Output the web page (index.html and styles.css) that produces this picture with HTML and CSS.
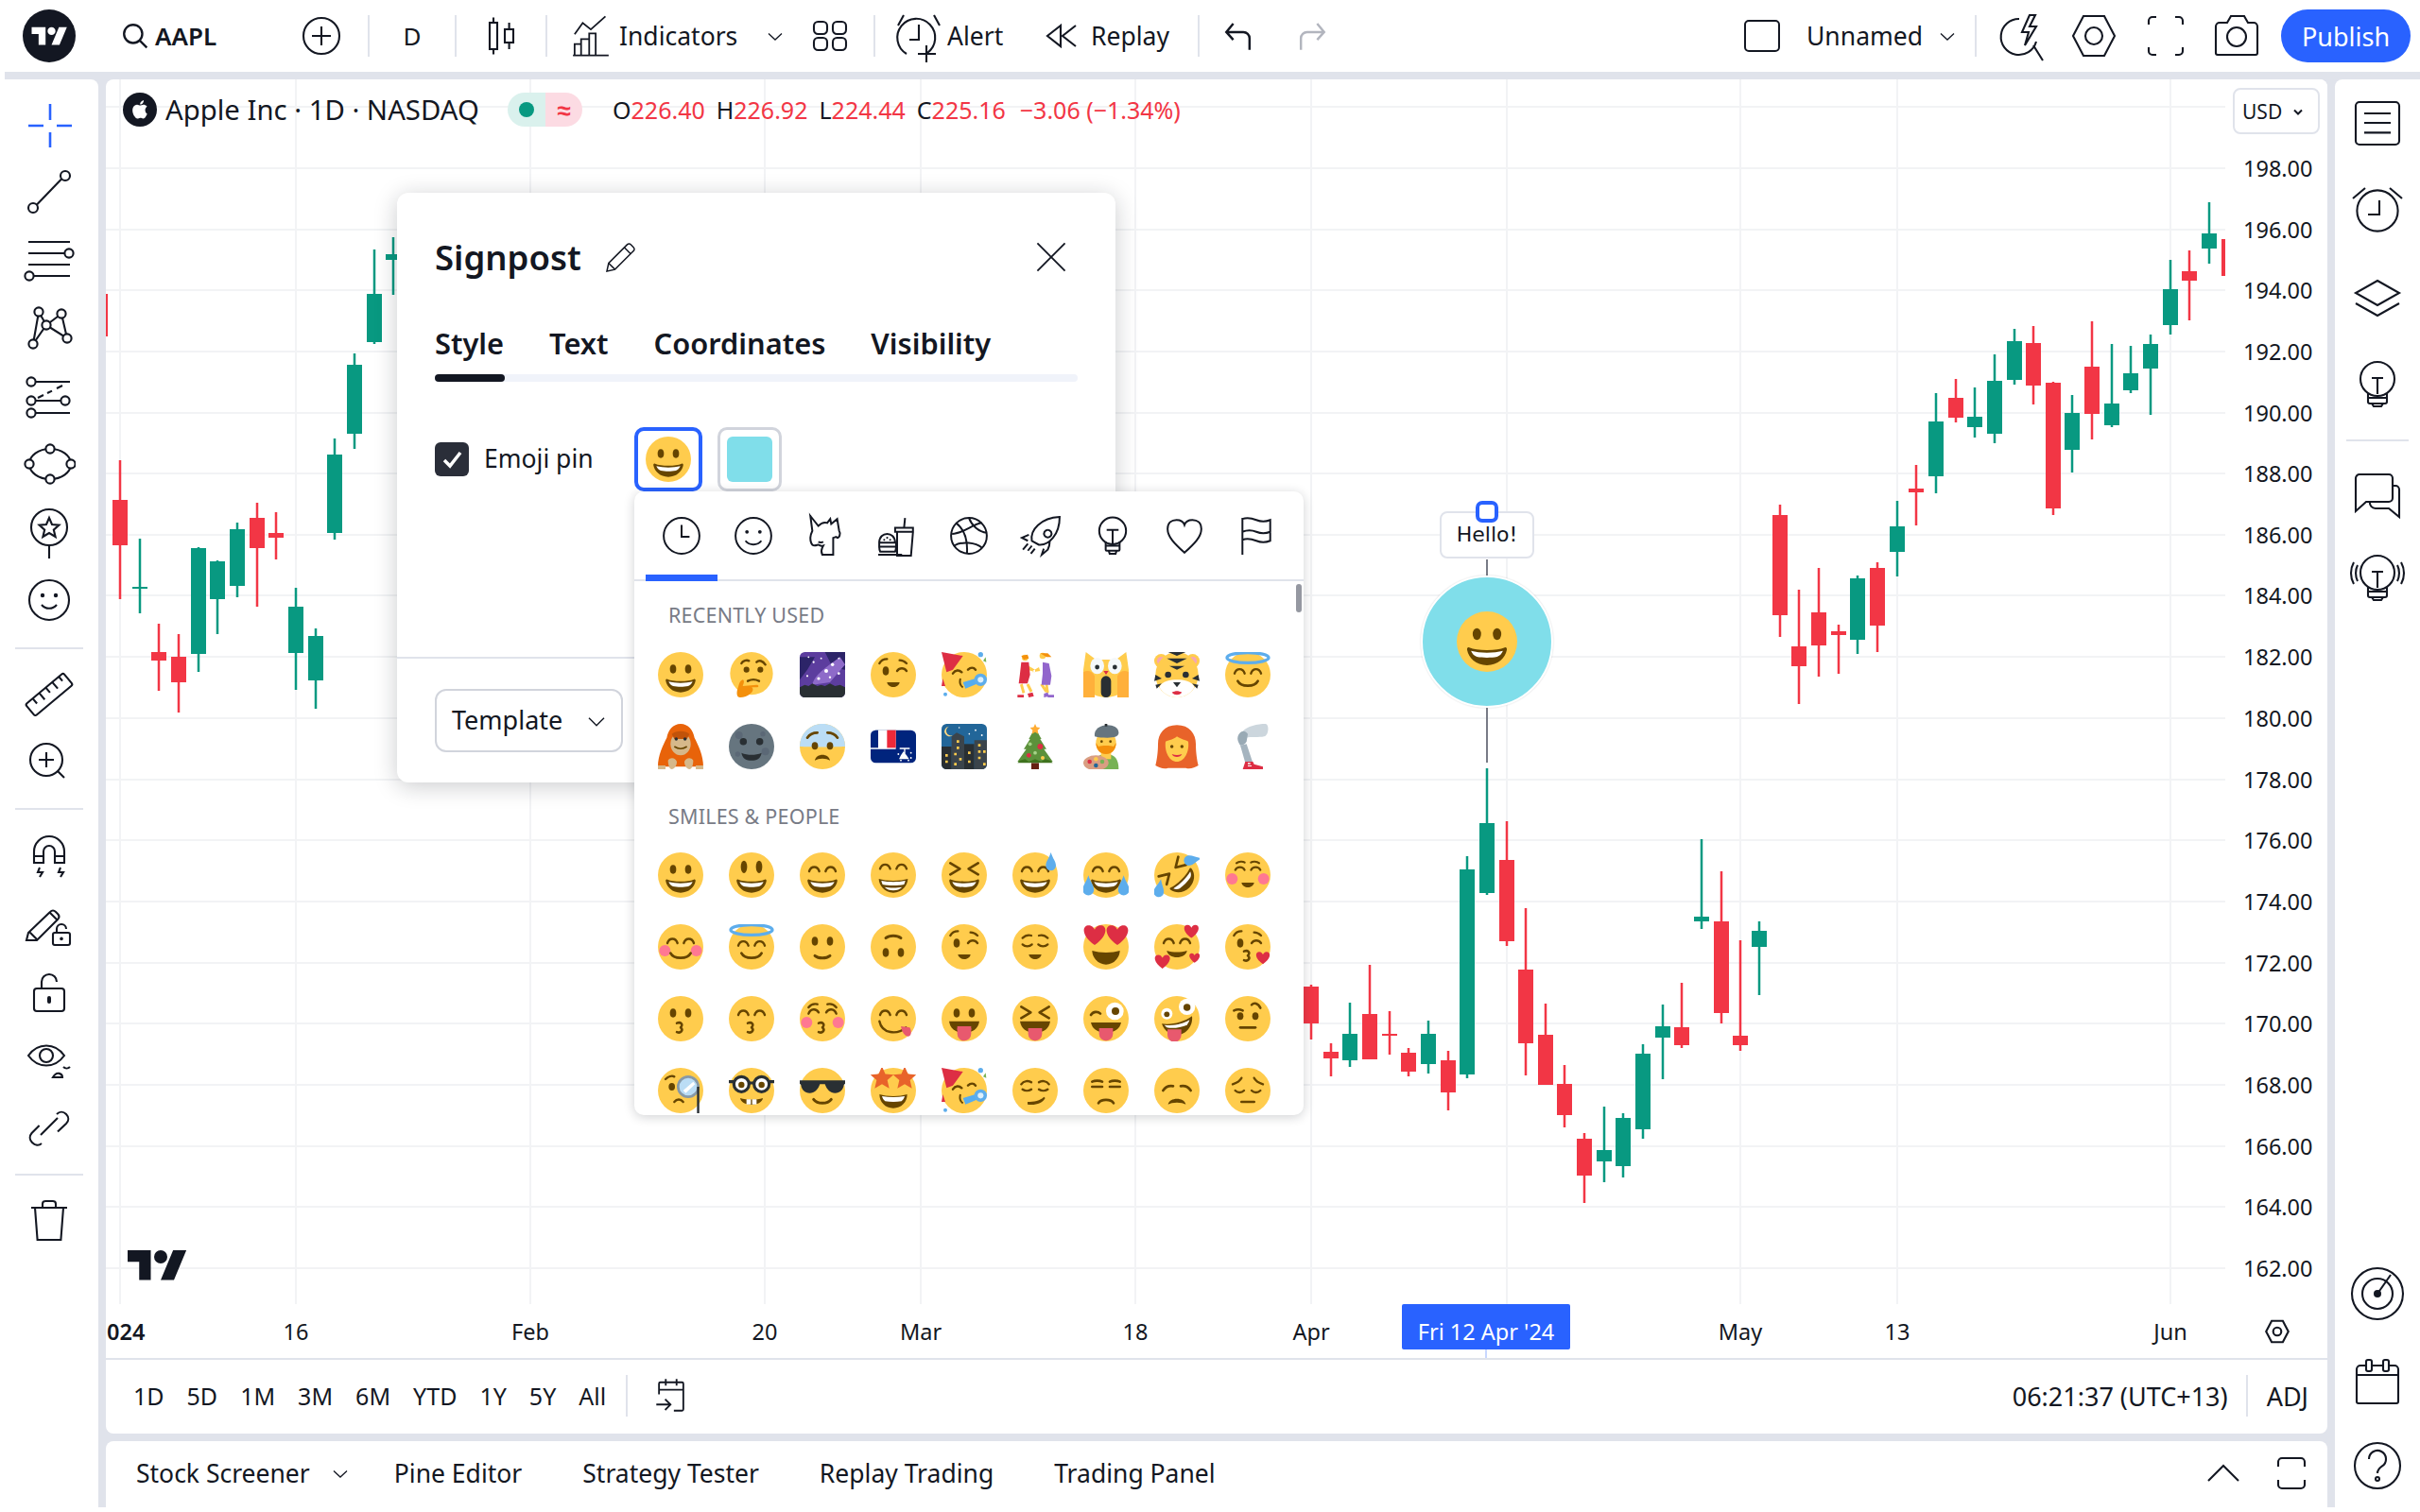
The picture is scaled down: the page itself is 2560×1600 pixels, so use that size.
FILE: index.html
```html
<!DOCTYPE html>
<html lang="en">
<head>
<meta charset="utf-8">
<title>AAPL chart</title>
<link rel="stylesheet" href="styles.css">
</head>
<body>
<svg class="defs" aria-hidden="true">
  <defs>
    <g id="tvlogo"><path d="M14 22H7V11H0V4h14v18zM28 22h-8l7.500-18h8L28 22z"/><circle cx="20" cy="8" r="4"/></g>
    <circle id="f" cx="18" cy="18" r="18" fill="#FFCC4D"/>
    <g id="eyes" fill="#664500"><ellipse cx="12" cy="13.500" rx="2.500" ry="3.500"/><ellipse cx="24" cy="13.500" rx="2.500" ry="3.500"/></g>
    <path id="arcs" fill="none" stroke="#664500" stroke-width="1.800" stroke-linecap="round" d="M7.500 15c1.500-4.500 6.500-4.500 8 0M20.500 15c1.500-4.500 6.500-4.500 8 0"/>
    <g id="mouth"><path fill="#664500" d="M7.500 21.500c2.500 1 6 1.500 10.500 1.500s8-.5 10.500-1.500c.9-.4 1.500.3 1.300 1.400C29 27.500 24.500 32 18 32S7 27.500 6.200 22.900c-.2-1.100.4-1.800 1.300-1.400z"/><path fill="#fff" d="M8.500 23.500c2.800.7 6 1.100 9.500 1.100s6.700-.4 9.500-1.100c-.6 1.700-2 3-3.500 3.500-3.500.7-8.500.7-12 0-1.500-.5-2.900-1.800-3.500-3.500z"/></g>
    <path id="smile" fill="none" stroke="#664500" stroke-width="2" stroke-linecap="round" d="M10 23c2.500 5 13.500 5 16 0"/>
    <path id="xeyes" fill="none" stroke="#664500" stroke-width="2" stroke-linecap="round" stroke-linejoin="round" d="M7 8.500l7.500 4.500L7 17.500M29 8.500l-7.500 4.500 7.500 4.500"/>
    <g id="cheeks" fill="#FF7892"><circle cx="5.500" cy="21" r="4.500"/><circle cx="30.500" cy="21" r="4.500"/></g>
    <path id="kiss" fill="none" stroke="#664500" stroke-width="1.900" stroke-linecap="round" stroke-linejoin="round" d="M15 21.500c3-1.200 5.500 1 3 3.400 2.500 2.200 0 5-3 3.700"/>
    <path id="heart" fill="#DD2E44" d="M0 5.500C-8 0-7.500-6-3.500-6-1.500-6-.5-4.500 0-3.500.5-4.500 1.500-6 3.500-6 7.500-6 8 0 0 5.500z"/>
    <path id="drop" fill="#5DADEC" d="M0-8C1.500-3 4-1 4 2.500a4 4 0 0 1-8 0C-4-1-1.500-3 0-8z"/>
    <path id="tongue" fill="#E8596E" d="M12.500 24.500v4.500a5.500 5.500 0 0 0 11 0v-4.500z"/>
    <g id="wink"><ellipse cx="12" cy="15" rx="2.500" ry="3.500" fill="#664500"/><path fill="none" stroke="#664500" stroke-width="1.800" stroke-linecap="round" d="M7 9c1-2 3.500-3.500 6-3.500M21 15c2-2.800 5.500-2.800 7.500 0M23 6.500c2 0 4 1 5.500 2.500"/></g>
    <path id="star" d="M0-8l2.300 5.300 5.700.5-4.300 3.800 1.300 5.600L0 4.300-5 7.200l1.300-5.600L-8-2.200l5.700-.5z" fill="#E8632A"/>

    <symbol id="grin" viewBox="0 0 36 36"><use href="#f"/><use href="#eyes"/><use href="#mouth"/></symbol>
    <symbol id="smiley" viewBox="0 0 36 36"><use href="#f"/><g fill="#664500"><ellipse cx="12" cy="11.500" rx="2.500" ry="5"/><ellipse cx="24" cy="11.500" rx="2.500" ry="5"/></g><use href="#mouth"/></symbol>
    <symbol id="happy" viewBox="0 0 36 36"><use href="#f"/><use href="#arcs"/><use href="#mouth"/></symbol>
    <symbol id="beam" viewBox="0 0 36 36"><use href="#f"/><use href="#arcs" y="-2"/><path fill="#664500" d="M6.500 21c3 1 7 1.500 11.500 1.500S26.500 22 29.500 21c0 5-4.500 11-11.500 11S6.500 26 6.500 21z"/><path fill="#fff" d="M8.500 22.500c3 .6 6 .9 9.500.9s6.500-.3 9.500-.9c-.2 1-.5 2-1 3-2.500.5-5.500.7-8.500.7s-6-.2-8.500-.7c-.5-1-.8-2-1-3zM11 27.500c2 .4 4.500.6 7 .6s5-.2 7-.6c-1.800 1.700-4.200 2.700-7 2.700s-5.200-1-7-2.700z"/></symbol>
    <symbol id="laugh" viewBox="0 0 36 36"><use href="#f"/><use href="#xeyes"/><use href="#mouth"/></symbol>
    <symbol id="sweat" viewBox="0 0 36 36"><use href="#f"/><use href="#arcs"/><use href="#mouth"/><use href="#drop" transform="translate(30.500 8)"/></symbol>
    <symbol id="joy" viewBox="0 0 36 36"><use href="#f"/><use href="#arcs"/><use href="#mouth"/><use href="#drop" transform="translate(4 27) scale(1.100)"/><use href="#drop" transform="translate(32 27) scale(1.100)"/></symbol>
    <symbol id="rofl" viewBox="0 0 36 36"><use href="#f"/><g transform="rotate(-45 18 18)"><use href="#xeyes"/><use href="#mouth"/></g><use href="#drop" transform="translate(4 29) rotate(10)"/><use href="#drop" transform="translate(30 6) rotate(80)"/></symbol>
    <symbol id="relaxed" viewBox="0 0 36 36"><use href="#f"/><use href="#cheeks"/><path fill="none" stroke="#664500" stroke-width="1.600" stroke-linecap="round" d="M8 14c1.500-3 6-3 7.500 0M20.500 14c1.500-3 6-3 7.500 0M9 8.500c2-1.500 5-1.500 6.500-.5M20.500 8c1.500-1 4.500-1 6.500.5"/><path fill="#664500" d="M13 24h10c-1 5-9 5-10 0z"/></symbol>
    <symbol id="blush" viewBox="0 0 36 36"><use href="#f"/><use href="#cheeks"/><use href="#arcs"/><use href="#smile"/></symbol>
    <symbol id="halo" viewBox="0 0 36 36"><use href="#f"/><use href="#arcs" y="2"/><use href="#smile"/><ellipse cx="18" cy="4.500" rx="16.500" ry="4" fill="none" stroke="#5DADEC" stroke-width="2.500"/></symbol>
    <symbol id="slight" viewBox="0 0 36 36"><use href="#f"/><use href="#eyes"/><path fill="none" stroke="#664500" stroke-width="2.200" stroke-linecap="round" d="M12 25c3 2.500 9 2.500 12 0"/></symbol>
    <symbol id="upside" viewBox="0 0 36 36"><use href="#slight" width="36" height="36" transform="rotate(180 18 18)"/></symbol>
    <symbol id="winky" viewBox="0 0 36 36"><use href="#f"/><use href="#wink"/><path fill="#664500" d="M13 24h10c-1 5-9 5-10 0z"/></symbol>
    <symbol id="relieved" viewBox="0 0 36 36"><use href="#f"/><path fill="none" stroke="#664500" stroke-width="1.700" stroke-linecap="round" d="M8 16c2 2 5.500 2 7.500 0M20.500 16c2 2 5.500 2 7.500 0M8 11c2-2 5-2.500 7-2M21 9c2-.5 5 0 7 2"/><path fill="#664500" d="M13 24h10c-1 5-9 5-10 0z"/></symbol>
    <symbol id="hearteyes" viewBox="0 0 36 36"><use href="#f"/><path fill="#664500" d="M7 21c3 1 7 1.500 11 1.500S26 22 29 21c0 5-4.500 11-11 11S7 26 7 21z"/><use href="#heart" transform="translate(9 9) scale(1.350)"/><use href="#heart" transform="translate(27 9) scale(1.350)"/></symbol>
    <symbol id="hearts" viewBox="0 0 36 36"><use href="#f"/><use href="#arcs"/><path fill="#664500" d="M10 21c5 1.500 11 1.500 16 0-1 7-15 7-16 0z"/><use href="#heart" transform="translate(29.500 6) scale(.9)"/><use href="#heart" transform="translate(6.500 30) scale(.95)"/><use href="#heart" transform="translate(32 27) scale(.65)"/></symbol>
    <symbol id="kissheart" viewBox="0 0 36 36"><use href="#f"/><use href="#wink"/><use href="#kiss"/><use href="#heart" transform="translate(30 27) scale(.85)"/></symbol>
    <symbol id="kissing" viewBox="0 0 36 36"><use href="#f"/><use href="#eyes"/><use href="#kiss"/></symbol>
    <symbol id="kisssmile" viewBox="0 0 36 36"><use href="#f"/><use href="#arcs"/><use href="#kiss"/></symbol>
    <symbol id="kissblush" viewBox="0 0 36 36"><use href="#f"/><use href="#cheeks"/><path fill="none" stroke="#664500" stroke-width="1.800" stroke-linecap="round" d="M7 14c1.500-4 6-4.500 8-1M21 13c2-3.500 6.500-3 8 1M7 9c2-2.500 5-3 7-2.500M22 6.500c2-.5 5 0 7 2.500"/><use href="#kiss"/></symbol>
    <symbol id="yum" viewBox="0 0 36 36"><use href="#f"/><use href="#arcs"/><path fill="none" stroke="#664500" stroke-width="1.800" stroke-linecap="round" d="M7 20c2 10 14 11 21 5"/><path fill="#E8596E" d="M24 24l7 1c2 3 1 7-1 7-3 0-5-3-6-8z"/></symbol>
    <symbol id="tongueout" viewBox="0 0 36 36"><use href="#f"/><use href="#eyes"/><path fill="#664500" d="M6 20h24c-1 6-5 9-12 9s-11-3-12-9z"/><use href="#tongue" y="1"/><path fill="#E8596E" d="M12.500 24h11v3h-11z"/></symbol>
    <symbol id="xtongue" viewBox="0 0 36 36"><use href="#f"/><use href="#xeyes"/><path fill="#664500" d="M6 20h24c-1 6-5 9-12 9s-11-3-12-9z"/><use href="#tongue" y="1"/></symbol>
    <symbol id="winkt" viewBox="0 0 36 36"><use href="#f"/><path fill="none" stroke="#664500" stroke-width="2" stroke-linecap="round" d="M6 15c2-3 5.500-3 7.500-1"/><circle cx="25" cy="12" r="7" fill="#fff"/><circle cx="25.500" cy="12" r="3" fill="#664500"/><path fill="#664500" d="M6 21h24c-1 5-5 8-12 8s-11-3-12-8z"/><use href="#tongue" y="1"/></symbol>
    <symbol id="zany" viewBox="0 0 36 36"><use href="#f"/><circle cx="26" cy="8.500" r="6.500" fill="#fff"/><circle cx="26" cy="9" r="2.800" fill="#664500"/><circle cx="10" cy="14" r="4.500" fill="#fff"/><circle cx="10" cy="14.500" r="2.200" fill="#664500"/><path fill="#664500" d="M6 22c8 1 17-1 24-6 1 8-5 15-12 15-5 0-10-3-12-9z"/><path fill="#fff" d="M8 23c8 1 15-1 20-4-.5 2-1.500 3-2 4-5 2-11 3-16 2z"/><use href="#tongue" x="-2" y="2"/></symbol>
    <symbol id="brow" viewBox="0 0 36 36"><use href="#f"/><g fill="#664500"><ellipse cx="12" cy="16" rx="2.500" ry="3"/><ellipse cx="24" cy="16" rx="2.500" ry="3"/><rect x="11" y="24" width="14" height="2" rx="1"/></g><path fill="none" stroke="#664500" stroke-width="1.900" stroke-linecap="round" d="M7 11.500c2-1 5-1 7 0M21 7c2-2 5-1.500 7 2.500"/></symbol>
    <symbol id="monocle" viewBox="0 0 36 36"><use href="#f"/><ellipse cx="11" cy="15" rx="2.500" ry="3" fill="#664500"/><path fill="none" stroke="#664500" stroke-width="1.800" stroke-linecap="round" d="M6 9c2-2 5-3 7-2M13 27c2-2.500 5-2.500 7 0"/><circle cx="24" cy="15" r="8" fill="#BBDDF5" stroke="#8899A6" stroke-width="2"/><path fill="#fff" d="M20 18l8-7 1.500 2-7.500 7z"/><rect x="31" y="15" width="1.800" height="21" fill="#292F33"/></symbol>
    <symbol id="nerd" viewBox="0 0 36 36"><use href="#f"/><g fill="#fff" stroke="#292F33" stroke-width="2.400"><circle cx="10" cy="13" r="6"/><circle cx="26" cy="13" r="6"/></g><path stroke="#292F33" stroke-width="2.400" d="M16 12h4M0 11h4M32 11h4"/><circle cx="10" cy="13.500" r="2.400" fill="#664500"/><circle cx="26" cy="13.500" r="2.400" fill="#664500"/><path fill="#664500" d="M9 24c5 1.500 13 1.500 18 0-1 7-17 7-18 0z"/><path fill="#fff" d="M14 25h3.500v4H14zM18.500 25H22v4h-3.500z"/></symbol>
    <symbol id="cool" viewBox="0 0 36 36"><use href="#f"/><path fill="#292F33" d="M0 10h36v2.500l-1 1c-.5 4-3 6.500-7 6.500-3.500 0-6.500-2.500-8-7h-4c-1.500 4.500-4.500 7-8 7-4 0-6.500-2.500-7-6.500l-1-1z"/><path fill="none" stroke="#664500" stroke-width="2.200" stroke-linecap="round" d="M11 25c3 4 11 4 14 0"/></symbol>
    <symbol id="starstruck" viewBox="0 0 36 36"><use href="#f"/><path fill="#664500" d="M7 21c3 1 7 1.500 11 1.500S26 22 29 21c0 6-4.500 11-11 11S7 27 7 21z"/><path fill="#fff" d="M9 22.500c6 1 12 1 18 0-.5 2-1.500 3-2.500 4-4 .7-9 .7-13 0-1-1-2-2-2.500-4z"/><use href="#star" transform="translate(9 8) scale(1.150)"/><use href="#star" transform="translate(27 8) scale(1.150)"/></symbol>
    <symbol id="party" viewBox="0 0 36 36"><use href="#f"/><path fill="#DD2E44" d="M0 0l17 3-8 11-5 2z"/><path fill="none" stroke="#664500" stroke-width="1.800" stroke-linecap="round" d="M9 17c2-3 5-3 7-1M21 14c2-2 4.500-2 6 0"/><path fill="none" stroke="#664500" stroke-width="1.500" d="M15 21c-1 3 0 6 2 7"/><path fill="#55ACEE" d="M17 24l13-4 1 4-12 5z"/><circle cx="31" cy="22" r="5" fill="#5DADEC"/><circle cx="31" cy="22" r="2.300" fill="#DCEFFC"/><circle cx="31" cy="2" r="2" fill="#5DADEC"/><circle cx="3" cy="33.500" r="1.500" fill="#5DADEC"/><path fill="#77B255" d="M33 7l2-3 .5 4z"/><path fill="#DD2E44" d="M1 21l2 6H0z"/></symbol>
    <symbol id="smirk" viewBox="0 0 36 36"><use href="#f"/><path fill="none" stroke="#664500" stroke-width="1.800" stroke-linecap="round" d="M7 13c2-3 6-3 8-1.500M21 11.500c2-1.500 6-1.500 8 1.500M8 17c2 1.500 5 1.500 7 0M21 17c2 1.500 5 1.500 7 0"/><path fill="#664500" d="M12 27c5 0 10-1 13-4l1 1c-2 4-8 6-14 5z"/></symbol>
    <symbol id="unamused" viewBox="0 0 36 36"><use href="#f"/><path fill="none" stroke="#664500" stroke-width="2" stroke-linecap="round" d="M7 11c2-1 6-1 8 0M21 11c2-1 6-1 8 0M7 15h8M21 15h8M12 28c2-3.500 10-3.500 12 0"/></symbol>
    <symbol id="sad" viewBox="0 0 36 36"><use href="#f"/><path fill="none" stroke="#664500" stroke-width="2" stroke-linecap="round" d="M7 18c2-3 5-4 8-3.500M21 14.500c3-.5 6 .5 8 3.500"/><path fill="#664500" d="M11 29c1-6 13-6 14 0-3-2-11-2-14 0z"/></symbol>
    <symbol id="pensive" viewBox="0 0 36 36"><use href="#f"/><path fill="none" stroke="#664500" stroke-width="1.800" stroke-linecap="round" d="M6 13c3-1 6-3 7-5M23 8c1 2 4 4 7 5M8 18c2 2 5 2 7 0M21 18c2 2 5 2 7 0"/><rect x="12" y="26" width="12" height="2" rx="1" fill="#664500"/></symbol>
    <symbol id="think" viewBox="0 0 36 36"><circle cx="18" cy="17" r="17" fill="#FFCC4D"/><circle cx="14" cy="14" r="2.300" fill="#664500"/><circle cx="25" cy="14" r="2.300" fill="#664500"/><path fill="none" stroke="#664500" stroke-width="1.800" stroke-linecap="round" d="M10 9c1-2 4-3 6-2M22 8c2-2 5-1 7 2M15 23c3-1.500 6-1.500 9 0"/><path fill="#F4900C" d="M9 36c-3 0-3-4-2-7 1-2 1-6 4-7 1.500 0 1 3 0 5l11-1c2 0 2 2 0 2h-4c2 1 1 4-1 5-2 2-5 3-8 3z"/></symbol>
    <symbol id="milky" viewBox="0 0 36 36"><rect width="36" height="36" rx="4" fill="#5C3D9E"/><path fill="#2C2468" d="M0 4h12L6 14 0 22zM20 0h16v14L26 12z"/><path fill="#8E6BC9" d="M10 26c2-9 14-16 22-22l4 6-12 14z"/><g fill="#fff"><circle cx="26" cy="10" r="1.300"/><circle cx="21" cy="15" r="1.500"/><circle cx="15" cy="21" r="1.200"/><circle cx="11" cy="8" r=".8"/><circle cx="6" cy="19" r=".8"/><circle cx="31" cy="17" r="1"/><circle cx="24" cy="20" r=".9"/><circle cx="31" cy="5" r=".7"/><circle cx="17" cy="5" r=".7"/><circle cx="7" cy="4" r=".7"/></g><path fill="#292F33" d="M0 28l4-2 3 1 3-2 4 2 3-1 3 1 4-2 4 2 4-1 4 2v4a4 4 0 0 1-4 4H4a4 4 0 0 1-4-4z"/></symbol>
    <symbol id="dancers" viewBox="0 0 36 36"><g fill="#FFCC4D"><circle cx="10" cy="4.500" r="2.500"/><circle cx="24" cy="3" r="2.500"/><path d="M13 11l5 3v2l-6-2zM21 12l-5 3v1l6-1zM8 25l2 7-2 1-2-7zM13 25l3 6-2 1-3-6zM24 25l4 6-2 1-4-6zM28 25l1 7-2 1-1-7z"/></g><path fill="#F4900C" d="M7 3l5-1 1 3-4 1zM22 1h6l3 3-4 0z"/><path fill="#DD2E44" d="M7 8h6l1 10-2 7H5l1-8z"/><path fill="#9266CC" d="M24 8l5 1 2 10-1 7h-7l1-9z"/><path fill="#DD2E44" d="M4 34h5v2H4zM12 33l4-1 1 3-4 1z"/><path fill="#9266CC" d="M25 33l3-1 1 3-4 1zM28 34h5v2h-5z"/></symbol>
    <symbol id="scream" viewBox="0 0 36 36"><path fill="#FFCC4D" d="M2 0l8 6h16l8-6 2 14v8a18 14 0 0 1-36 0v-8z"/><path fill="#FFB03B" d="M0 16c3-2 7-1 9 3v17H0zM36 16c-3-2-7-1-9 3v17h9z"/><ellipse cx="11" cy="11" rx="5.500" ry="6.500" fill="#F5F8FA"/><ellipse cx="25" cy="11" rx="5.500" ry="6.500" fill="#F5F8FA"/><circle cx="11" cy="12" r="1.800" fill="#292F33"/><circle cx="25" cy="12" r="1.800" fill="#292F33"/><path fill="#DD2E44" d="M16 15h4l-2 3z"/><rect x="14" y="19" width="8" height="17" rx="4" fill="#292F33"/></symbol>
    <symbol id="tiger" viewBox="0 0 36 36"><circle cx="5.500" cy="7" r="5.500" fill="#FFCC4D"/><circle cx="30.500" cy="7" r="5.500" fill="#FFCC4D"/><circle cx="5.500" cy="7" r="3.300" fill="#F7A6B4"/><circle cx="30.500" cy="7" r="3.300" fill="#F7A6B4"/><ellipse cx="18" cy="18" rx="17" ry="18" fill="#FFCC4D"/><path fill="#292F33" d="M11 0h14l-7 3zM10 5h16l-8 4zM12 11h12l-6 3zM1 18l5 3-6 2zM35 18l-5 3 6 2zM1 26l5-1-4 4zM35 26l-5-1 4 4z"/><circle cx="11" cy="18" r="2.500" fill="#292F33"/><circle cx="25" cy="18" r="2.500" fill="#292F33"/><path fill="#fff" d="M4 28c2-5 9-6 14-6s12 1 14 6c-3 5-8 8-14 8S7 33 4 28z"/><path fill="#292F33" d="M15 24h6l-3 4z"/><path fill="#DD2E44" d="M14 32c3-1.500 5-1.500 8 0-2 2.500-6 2.500-8 0z"/></symbol>
    <symbol id="orang" viewBox="0 0 36 36"><path fill="#E8630A" d="M18 0c6 0 10 5 11 11 3 6 7 14 7 23H0c0-9 4-17 7-23C8 5 12 0 18 0z"/><ellipse cx="18" cy="16" rx="8" ry="9" fill="#D6B88A"/><path fill="#C1530A" d="M11 8c3-3 11-3 14 0l-2 4H13z"/><circle cx="14.500" cy="12" r="1.300" fill="#292F33"/><circle cx="21.500" cy="12" r="1.300" fill="#292F33"/><path fill="none" stroke="#664500" stroke-width="1.200" d="M13 18c3 2 7 2 10 0"/><path fill="#D6B88A" d="M8 29c2-3 6-2 7 1 0 3-2 6-4 6s-3-4-3-7zM28 29c-2-3-6-2-7 1 0 3 2 6 4 6s3-4 3-7zM0 33h6v3H0zM30 33h6v3h-6z"/></symbol>
    <symbol id="moon" viewBox="0 0 36 36"><circle cx="18" cy="18" r="18" fill="#66757F"/><circle cx="8" cy="9" r="3" fill="#5B6876"/><circle cx="27" cy="8" r="2" fill="#5B6876"/><circle cx="29" cy="22" r="3" fill="#5B6876"/><circle cx="7" cy="24" r="2" fill="#5B6876"/><circle cx="11.500" cy="14" r="2.800" fill="#292F33"/><circle cx="24.500" cy="14" r="2.800" fill="#292F33"/><path fill="#292F33" d="M10 23c5 2 11 2 16 0-1 5-4 6-8 6s-7-1-8-6z"/></symbol>
    <symbol id="fear" viewBox="0 0 36 36"><use href="#f"/><path fill="#BBDDF5" d="M0 18C0 8 8 0 18 0s18 8 18 18c-8 .5-28 .5-36 0z"/><ellipse cx="12" cy="17.500" rx="2.500" ry="3" fill="#664500"/><ellipse cx="24" cy="17.500" rx="2.500" ry="3" fill="#664500"/><path fill="none" stroke="#664500" stroke-width="2" stroke-linecap="round" d="M6 11c2-3 5-4 8-4M22 7c3 0 6 1 8 4"/><path fill="#664500" d="M12 29c1-6 11-6 12 0-3-2-9-2-12 0z"/></symbol>
    <symbol id="flagtf" viewBox="0 0 36 36"><path fill="#00247D" d="M4 5h28a4 4 0 0 1 4 4v18a4 4 0 0 1-4 4H4a4 4 0 0 1-4-4V9a4 4 0 0 1 4-4z"/><path fill="#fff" d="M0 9a4 4 0 0 1 4-4h16v15H0z"/><path fill="#00247D" d="M0 9a4 4 0 0 1 4-4h2v14H0z"/><path fill="#ED2939" d="M13 5h7v14h-7z"/><g fill="#fff"><path d="M23 19h8v1h-3.500v6h-1v-6H23zM24 25l2-3 2.500 3 2 3h-8z"/><circle cx="22" cy="24" r=".7"/><circle cx="32" cy="23" r=".7"/><circle cx="24" cy="29" r=".7"/><circle cx="30" cy="29" r=".7"/><circle cx="32" cy="27" r=".7"/></g></symbol>
    <symbol id="night" viewBox="0 0 36 36"><rect width="36" height="36" rx="4" fill="#226699"/><path fill="#FFD983" d="M6 2a4 4 0 1 0 3 7 3.500 3.500 0 1 1-3-7z"/><g fill="#fff"><circle cx="14" cy="3" r=".6"/><circle cx="27" cy="5" r=".7"/><circle cx="32" cy="9" r=".7"/><circle cx="22" cy="8" r=".6"/></g><path fill="#292F33" d="M0 18h8v18H4a4 4 0 0 1-4-4z"/><path fill="#3B444B" d="M8 10l4-3 6 3v26H8z"/><path fill="#292F33" d="M18 16h8v20h-8z"/><path fill="#3B444B" d="M26 13h10v19a4 4 0 0 1-4 4h-6z"/><g fill="#FFCC4D"><path d="M12 13h2v2h-2zM12 18h2v2h-2zM10 23h2v2h-2zM14 27h2v2h-2zM10 31h2v2h-2zM3 24h2v2H3zM3 29h2v2H3zM21 22h2v2h-2zM21 29h2v2h-2zM29 16h2v2h-2zM29 21h2v2h-2zM33 21h2v2h-2zM29 26h2v2h-2zM33 31h2v2h-2z"/></g></symbol>
    <symbol id="tree" viewBox="0 0 36 36"><path fill="#662113" d="M15 31h6v5h-6z"/><path fill="#5C913B" d="M18 3l5 9-1 0 5 8-2 0 7 10H4l7-10H9l5-8-1 0z"/><path fill="#3E721D" d="M6 29l4-1 3 2 5-2 5 2 3-2 4 1 2 2H4z"/><path fill="#FFAC33" d="M18 0l1.200 2.600 2.800.4-2 2 .5 3L18 6.600 15.500 8l.5-3-2-2 2.800-.4z"/><circle cx="22" cy="18" r="2.200" fill="#DD2E44"/><circle cx="13" cy="25" r="1.800" fill="#DD2E44"/><circle cx="24" cy="27" r="1.500" fill="#FFCC4D"/><circle cx="14" cy="16" r="1.400" fill="#A6D388"/><circle cx="18" cy="23" r="1.400" fill="#A6D388"/></symbol>
    <symbol id="artist" viewBox="0 0 36 36"><path fill="#77B255" d="M8 36c0-8 3-12 10-12s10 4 10 12z"/><path fill="#FFCC4D" d="M14 22h8v6h-8z"/><ellipse cx="18" cy="15" rx="8" ry="9" fill="#FFCC4D"/><path fill="#F4900C" d="M10 15c0 5 3 9 8 9s8-4 8-9l-2 3c-3-1-9-1-12 0z"/><circle cx="14.500" cy="14" r="1" fill="#664500"/><circle cx="21.500" cy="14" r="1" fill="#664500"/><path fill="#66757F" d="M9 10C8 4 14 1 19 1s9 2 9 6c0 3-3 4-9 4-4 0-7 0-10-1z"/><path fill="#292F33" d="M17 0h2v2h-2z"/><ellipse cx="10" cy="31" rx="10" ry="6" fill="#D99E82"/><circle cx="5" cy="30" r="1.700" fill="#DD2E44"/><circle cx="10" cy="28" r="1.700" fill="#FFCC4D"/><circle cx="15" cy="30" r="1.700" fill="#77B255"/><circle cx="10" cy="33" r="1.700" fill="#226699"/></symbol>
    <symbol id="redhair" viewBox="0 0 36 36"><path fill="#E8632A" d="M18 1c10 0 15 7 15 15 0 7 1 13 2 17-3 2-7 3-10 2H11c-3 1-7 0-10-2 1-4 2-10 2-17C3 8 8 1 18 1z"/><path fill="#FFCC4D" d="M18 10c3 2 7 3 9 4 1 8-3 16-9 16S8 22 9 14c3-1 7-2 9-4z"/><circle cx="14" cy="18" r="1.300" fill="#664500"/><circle cx="22" cy="18" r="1.300" fill="#664500"/><path fill="#DD2E44" d="M14 24c3 1 5 1 8 0-1 3-7 3-8 0z"/></symbol>
    <symbol id="mechleg" viewBox="0 0 36 36"><path fill="#CCD6DD" d="M14 6c3-4 12-6 18-6 3 0 3 9-1 10-4 1-11 0-14 1z"/><path fill="#99AAB5" d="M11 8c2-3 5-3 7 0l-1 6c-1 2-3 3-5 3-2-3-3-6-1-9z"/><path fill="#A5B4BF" d="M12 17l5-1 5 15h-6z"/><path fill="#DD2E44" d="M16 30h6l1 2 7 2v2H14z"/><path fill="#fff" d="M18 31h2v1h-2zM18 33h3v.8h-3z"/></symbol>

    <g id="bulbshape"><circle cx="14" cy="11" r="9"/><path d="M9 18.500V23a1 1 0 0 0 1 1h8a1 1 0 0 0 1-1v-4.500M9 21h10M11 24l1 1.500h4l1-1.500M11 10.500h6M14 10.500V19"/></g>
  </defs>
</svg>

<div class="app">
  <header class="topbar">
    <svg class="logo" viewBox="0 0 56 56"><circle cx="28" cy="28" r="28" fill="#131722"/><use href="#tvlogo" fill="#fff" transform="translate(9.500 14.500) scale(1.050)"/></svg>
    <div class="symbol"><svg class="i28 gapicon" viewBox="0 0 28 28"><circle class="st1" cx="12" cy="12" r="9"/><path class="st1" d="M18.500 18.500l7 7"/></svg><span class="bold">AAPL</span></div>
    <svg class="i44 plus" viewBox="0 0 22 22"><circle class="st" cx="11" cy="11" r="9.500"/><path class="st" d="M11 6v10M6 11h10"/></svg>
    <i class="tsep s1"></i>
    <span class="res">D</span>
    <i class="tsep s2"></i>
    <svg class="i56 cndl" viewBox="0 0 28 28"><g class="st"><path d="M9.500 4.200v19.600M17.800 7v14"/><rect x="7.500" y="7" width="4" height="14" fill="#fff"/><rect x="15.500" y="10.500" width="4.500" height="7" fill="#fff"/></g></svg>
    <i class="tsep s3"></i>
    <svg class="i48 indic" viewBox="0 0 28 28"><path class="st" d="M4 25.500V19h4v6.500M8 25.500V16h5v9.500M13 25.500V12.500h4v13M3 26h22M4 13l5-7 5 4 9-8"/></svg>
    <span class="lbl ind-t">Indicators</span>
    <svg class="chev ind-c" viewBox="0 0 18 18"><path class="st15" d="M2 6.500l7 6.500 7-6.500"/></svg>
    <svg class="i56 tmpl" viewBox="0 0 28 28"><g class="st"><rect x="5.500" y="6.500" width="7" height="6.500" rx="2.200"/><rect x="15.500" y="6.500" width="7" height="6.500" rx="2.200"/><rect x="5.500" y="15" width="7" height="6.500" rx="2.200"/><rect x="15.500" y="15" width="7" height="6.500" rx="2.200"/></g></svg>
    <i class="tsep s4"></i>
    <svg class="i56 alrt" viewBox="0 0 28 28"><path class="st" d="M18.500 23a10 10 0 1 0-11 .5M14 8v8H9M18 19v9M13.500 23.500h9.500M3 8.500L6 3M25 8.500L22 3"/></svg>
    <span class="lbl alrt-t">Alert</span>
    <svg class="i56 rply" viewBox="0 0 28 28"><path class="st" d="M12 8.500L5 14l7 5.500zM20 8.500L13 14l7 5.500"/></svg>
    <span class="lbl rply-t">Replay</span>
    <i class="tsep s5"></i>
    <svg class="i36 undo" viewBox="0 0 22 22"><path class="st13" d="M6.500 3L2 8.500l4.500 5M2.500 8.500H13a4 4 0 0 1 4 4V20"/></svg>
    <svg class="i36 redo" viewBox="0 0 22 22"><path class="stg" d="M15.500 3L20 8.500l-4.500 5M19.500 8.500H9a4 4 0 0 0-4 4V20"/></svg>
    <div class="grow"></div>
    <svg class="layout" viewBox="0 0 40 36"><rect class="st2" x="2" y="2" width="36" height="32" rx="4"/></svg>
    <span class="lbl unn">Unnamed</span>
    <svg class="chev unn-c" viewBox="0 0 18 18"><path class="st15" d="M2 6.500l7 6.500 7-6.500"/></svg>
    <i class="tsep s6"></i>
    <svg class="i56 qs" viewBox="0 0 28 28"><path class="st" d="M11 5A9.500 9.500 0 1 0 20 17M18.500 19l5 8M16.500 3l-4 9h3.500l-2 7 6-10h-3.500l3-6z"/></svg>
    <svg class="i56 hex" viewBox="0 0 28 28"><path class="st" d="M8.500 3.500h11L25 14l-5.500 10.500h-11L3 14z"/><circle class="st" cx="14" cy="14" r="4.500"/></svg>
    <svg class="i56 fs" viewBox="0 0 28 28"><path class="st" d="M5 8V6a2 2 0 0 1 2-2h2M19 4h2a2 2 0 0 1 2 2v2M23 20v2a2 2 0 0 1-2 2h-2M9 24H7a2 2 0 0 1-2-2v-2"/></svg>
    <svg class="i56 cam" viewBox="0 0 28 28"><path class="st" d="M3 9a2 2 0 0 1 2-2h4l2-3.500h7L20 7h3a2 2 0 0 1 2 2v14a1 1 0 0 1-1 1H4a1 1 0 0 1-1-1z"/><circle class="st" cx="14" cy="14.500" r="5"/></svg>
    <span class="publish">Publish</span>
  </header>

  <div class="workspace">
    <aside class="lefttools">
      <div class="tool"><svg class="i56" viewBox="0 0 28 28"><path class="stb" d="M14.500 3.500V12M14.500 18.500v8M3 15h8M18 15h8"/></svg></div>
      <div class="tool"><svg class="i56" viewBox="0 0 28 28"><path class="st" d="M20.500 7.300L7.500 20.700"/><circle class="st" cx="22.500" cy="5.500" r="2.500"/><circle class="st" cx="5.500" cy="22.500" r="2.500"/></svg></div>
      <div class="tool"><svg class="i56" viewBox="0 0 28 28"><path class="st" d="M3 4.500h22M3 10.500h19M3 16.500h22M6 22.500h19"/><circle class="st" cx="24.500" cy="10.500" r="2.300"/><circle class="st" cx="3.500" cy="22.500" r="2.300"/></svg></div>
      <div class="tool"><svg class="i56" viewBox="0 0 28 28"><path class="st" d="M5.500 22.500L8.500 5.500 12.500 12.500 20.500 6.500 23.500 19.500 12.500 12.500 5.500 22.500"/><g class="stw"><circle cx="8.500" cy="5.500" r="2.300"/><circle cx="20.500" cy="6.500" r="2.300"/><circle cx="12.500" cy="12.500" r="2.300"/><circle cx="5.500" cy="22.500" r="2.300"/><circle cx="23.500" cy="19.500" r="2.300"/></g></svg></div>
      <div class="tool"><svg class="i56" viewBox="0 0 28 28"><path class="st" d="M7 6.500h18M7 16.500h13M7 23h18M8 15l3-1.500M13 12.500l2.500-1.200M18 10l3-1.500"/><circle class="st" cx="4.500" cy="6.500" r="2.300"/><circle class="st" cx="4.500" cy="16.500" r="2.300"/><circle class="st" cx="22.500" cy="16.500" r="2.300"/><circle class="st" cx="4.500" cy="23" r="2.300"/></svg></div>
      <div class="tool"><svg class="i56" viewBox="0 0 28 28"><ellipse class="st" cx="14.500" cy="14" rx="11" ry="8"/><g class="stw"><circle cx="3.500" cy="14" r="2.300"/><circle cx="14.500" cy="6" r="2.300"/><circle cx="25.500" cy="14" r="2.300"/><circle cx="14.500" cy="22" r="2.300"/></g></svg></div>
      <div class="tool"><svg class="i56" viewBox="0 0 28 28"><circle class="st" cx="14" cy="11.500" r="9.500"/><path class="st" d="M14 21v7M14 6.500l1.500 3.500 3.700.3-2.800 2.500.9 3.700-3.300-2-3.300 2 .9-3.700-2.800-2.500 3.700-.3z"/></svg></div>
      <div class="tool"><svg class="i56" viewBox="0 0 28 28"><circle class="st" cx="14" cy="14" r="10.500"/><circle cx="10.500" cy="11.500" r="1.100" fill="#131722"/><circle cx="17.500" cy="11.500" r="1.100" fill="#131722"/><path class="st" d="M10 16.500c2 2.500 6 2.500 8 0"/></svg></div>
      <div class="vsep first"></div>
      <div class="tool short"><svg class="i56" viewBox="0 0 28 28"><g transform="rotate(-40 14 14)"><rect class="st" x="1" y="10" width="26" height="8" rx="1"/><path class="st" d="M6 10v3.500M10.500 10v4.500M15 10v3.500M19.500 10v4.500M24 10v3"/></g></svg></div>
      <div class="tool short"><svg class="i56" viewBox="0 0 28 28"><circle class="st" cx="12.500" cy="14" r="8.500"/><path class="st" d="M12.500 10v8M8.500 14h8M18.500 20l3.500 3.500"/></svg></div>
      <div class="vsep second"></div>
      <div class="tool mid"><svg class="i56" viewBox="0 0 28 28"><path class="st" d="M6 17V11a8 8 0 0 1 16 0v6h-5v-6a3 3 0 0 0-6 0v6H6zM6 13.500h5M17 13.500h5M9 19.500l-1 2.500h2.500L9 24.500M20 19.500l-1 2.500h2.500L20 24.500"/></svg></div>
      <div class="tool mid"><svg class="i56" viewBox="0 0 28 28"><path class="st" d="M2 22.500h5.500L18.500 11.500c1-1 1-2 0-3l-1-1c-1-1-2-1-3 0L3 18.500zM3.500 18l4 4M14.500 8l4 4"/><rect class="st" x="16" y="18.500" width="9" height="6.500" rx="1"/><path class="st" d="M18 18.500V16.500a2.500 2.500 0 0 1 5 0"/><circle cx="20.500" cy="21.700" r=".9" fill="#131722"/></svg></div>
      <div class="tool mid"><svg class="i56" viewBox="0 0 28 28"><rect class="st" x="6" y="12" width="16" height="12" rx="1.500"/><path class="st" d="M10 12V8.500a4 4 0 0 1 8 0"/><rect x="13" y="16" width="2" height="4" rx="1" fill="#131722"/></svg></div>
      <div class="tool mid"><svg class="i56" viewBox="0 0 28 28"><path class="st" d="M3 12c5-7 14-7 19 0-5 7-14 7-19 0z"/><circle class="st" cx="12.500" cy="12" r="3.500"/><path class="st" d="M16 23.500h5c0-2-3-3.500-5 0zM21.500 18c1 1 2.500 1 3.500 0"/></svg></div>
      <div class="tool mid"><svg class="i56" viewBox="0 0 28 28"><path class="st" d="M10 22.500c-1.500 1.300-3.500 1-5-.5s-1.500-3.500-.2-5l4-4M18 7c1.500-1.500 3.500-1.500 5 0s1.500 3.500 0 5l-4.500 4.300M9.500 18l9-9"/></svg></div>
      <div class="vsep third"></div>
      <div class="tool"><svg class="i56" viewBox="0 0 28 28"><path class="st" d="M4.500 7.500h19M10.500 7.500V5.500a1.500 1.500 0 0 1 1.500-1.500h4a1.500 1.500 0 0 1 1.500 1.500v2M6.500 7.500l1.300 17h12.400l1.300-17"/></svg></div>
    </aside>

    <div class="center">
      <main class="chart">
        <div class="pane">
          <svg class="plot" viewBox="112 84 2350 1353" role="img" aria-label="Candlestick chart">
            <path class="gridl" d="M112 113H2354M112 178H2354M112 243H2354M112 307H2354M112 372H2354M112 437H2354M112 501H2354M112 566H2354M112 630H2354M112 695H2354M112 760H2354M112 825H2354M112 889H2354M112 954H2354M112 1019H2354M112 1083H2354M112 1148H2354M112 1213H2354M112 1277H2354M112 1342H2354M127 84V1380M313 84V1380M561 84V1380M809 84V1380M974 84V1380M1201 84V1380M1387 84V1380M1594 84V1380M1841 84V1380M2007 84V1380M2296 84V1380"/>
            <path class="wick red" d="M127 487V634M168 660V731M189 671V754M272 532V642M292 542V592M1387 1042V1100M1408 1104V1139M1449 1021V1121M1470 1070V1116M1490 1109V1139M1532 1112V1175M1594 869V1001M1614 961V1138M1635 1062V1148M1655 1127V1193M1676 1199V1273M1779 1040V1109M1821 922V1083M1841 995V1112M1883 534V674M1903 624V745M1924 601V716M1945 661V713M1986 595V690M2027 492V556M2069 401V447M2151 345V428M2172 404V545M2213 340V465M2316 265V339"/>
            <path class="body red" d="M106 311V356M127 529V577M168 690V699M189 695V722M272 548V580M292 564V569M1387 1044V1083M1408 1113V1120M1449 1073V1121M1470 1094V1096M1490 1114V1134M1532 1122V1156M1594 910V996M1614 1026V1104M1635 1095V1148M1655 1147V1180M1676 1205V1244M1779 1087V1106M1821 975V1072M1841 1096V1106M1883 545V651M1903 684V705M1924 648V683M1945 668V672M1986 601V662M2027 517V521M2069 421V442M2151 363V408M2172 405V538M2213 388V438M2316 287V297M2358 253V292"/>
            <path class="wick grn" d="M148 570V649M210 579V711M230 593V671M251 553V632M313 622V730M334 665V750M354 464V571M375 374V475M396 264V364M416 251V312M1428 1061V1129M1511 1080V1136M1552 906V1141M1573 813V947M1697 1171V1251M1717 1178V1246M1738 1105V1205M1759 1063V1142M1800 888V983M1861 975V1053M1965 609V692M2007 530V610M2048 416V522M2089 410V463M2110 375V469M2131 348V407M2192 418V500M2234 364V452M2254 366V416M2275 354V439M2296 275V354M2337 214V279"/>
            <path class="body grn" d="M148 621V623M210 580V692M230 594V634M251 560V620M313 642V691M334 673V720M354 481V564M375 386V459M396 311V362M416 269V275M1428 1094V1122M1511 1094V1126M1552 920V1137M1573 871V945M1697 1217V1229M1717 1183V1234M1738 1115V1195M1759 1086V1098M1800 970V975M1861 985V1002M1965 612V677M2007 557V584M2048 446V504M2089 441V452M2110 403V459M2131 361V402M2192 437V476M2234 427V450M2254 395V413M2275 364V390M2296 306V344M2337 247V263"/>
            <rect class="axisbg" x="2354" y="84" width="108" height="1354"/>
            <rect class="axisbg" x="112" y="1380" width="2350" height="58"/>
            <use href="#tvlogo" class="mark" transform="translate(135 1316) scale(1.750)"/>
            <g class="plabels">
              <text x="2373" y="187">198.00</text><text x="2373" y="252">196.00</text><text x="2373" y="316">194.00</text><text x="2373" y="381">192.00</text><text x="2373" y="446">190.00</text><text x="2373" y="510">188.00</text><text x="2373" y="575">186.00</text><text x="2373" y="639">184.00</text><text x="2373" y="704">182.00</text><text x="2373" y="769">180.00</text><text x="2373" y="834">178.00</text><text x="2373" y="898">176.00</text><text x="2373" y="963">174.00</text><text x="2373" y="1028">172.00</text><text x="2373" y="1092">170.00</text><text x="2373" y="1157">168.00</text><text x="2373" y="1222">166.00</text><text x="2373" y="1286">164.00</text><text x="2373" y="1351">162.00</text>
            </g>
            <g class="tlabels">
              <text class="thick" x="113" y="1418">024</text><text x="313" y="1418">16</text><text x="561" y="1418">Feb</text><text x="809" y="1418">20</text><text x="974" y="1418">Mar</text><text x="1201" y="1418">18</text><text x="1387" y="1418">Apr</text><text x="1841" y="1418">May</text><text x="2007" y="1418">13</text><text x="2296" y="1418">Jun</text>
            </g>
            <rect class="crossbox" x="1483" y="1380" width="178" height="48" rx="2"/>
            <path class="crossline" d="M1572 1428V1438"/>
            <text class="crosstext" x="1572" y="1418">Fri 12 Apr '24</text>
            <g transform="translate(2394 1394) scale(1.070)"><path class="sthex" d="M8.500 3.500h11L25 14l-5.500 10.500h-11L3 14z"/><circle class="sthex" cx="14" cy="14" r="4"/></g>
          </svg>

          <div class="legend">
            <svg class="apple" viewBox="0 0 36 36"><circle cx="18" cy="18" r="18" fill="#131722"/><path fill="#fff" d="M23.500 18.500c0-2.500 2-3.700 2.100-3.800-1.200-1.700-3-1.900-3.600-2-1.500-.1-3 .9-3.700.9-.8 0-2-.9-3.200-.9-1.700 0-3.200 1-4.100 2.500-1.700 3-.4 7.500 1.300 9.900.8 1.200 1.800 2.500 3 2.500 1.200 0 1.700-.8 3.100-.8s1.900.8 3.100.7c1.300 0 2.100-1.200 2.900-2.400.9-1.400 1.300-2.700 1.300-2.800-.1 0-2.100-.8-2.100-3.800zM21 11.200c.7-.8 1.100-1.900 1-3-1 0-2.100.7-2.800 1.500-.6.700-1.100 1.800-1 2.900 1.100.1 2.200-.6 2.800-1.400z"/></svg>
            <span class="ticker">Apple Inc · 1D · NASDAQ</span>
            <span class="pill"><span class="pill-g"><i class="dot"></i></span><span class="pill-r">≈</span></span>
            <span class="ohlc"><b>O</b><em>226.40</em><b class="mg">H</b><em>226.92</em><b class="mg">L</b><em>224.44</em><b class="mg">C</b><em>225.16</em><em class="mg2">−3.06 (−1.34%)</em></span>
          </div>

          <div class="usd"><span>USD</span><svg class="chev-s" viewBox="0 0 14 14"><path class="st2" d="M3 5.500l4 4 4-4"/></svg></div>

          <div class="signpost">
            <div class="sp-label">Hello!<i class="sp-handle"></i></div>
            <i class="sp-stem top"></i>
            <div class="sp-pin"><svg class="sp-emoji"><use href="#grin"/></svg></div>
            <i class="sp-stem bottom"></i>
          </div>

          <section class="dialog">
            <div class="dlg-head">
              <span class="dlg-title">Signpost</span>
              <svg class="pencil" viewBox="0 0 28 28"><path class="st" d="M3.500 24.500l1.300-6L18.500 4.800c.8-.8 2-.8 2.700 0l2 2c.8.800.8 2 0 2.700L9.500 23.200zM4.800 18.500l4.700 4.700M16.500 7l4.500 4.500"/></svg>
              <span class="grow"></span>
              <svg class="close" viewBox="0 0 28 28"><path class="st0" d="M2 2l24 24M26 2L2 26"/></svg>
            </div>
            <div class="dlg-tabs"><span>Style</span><span>Text</span><span>Coordinates</span><span>Visibility</span></div>
            <div class="dlg-track"><i></i></div>
            <div class="dlg-row">
              <span class="check"><svg viewBox="0 0 36 36"><path d="M10 19l6 6 11-14" fill="none" stroke="#fff" stroke-width="3.500"/></svg></span>
              <span class="lbl pinlbl">Emoji pin</span>
              <span class="emo-btn"><svg class="em"><use href="#grin"/></svg></span>
              <span class="col-btn"><i></i></span>
            </div>
            <div class="dlg-foot">
              <div class="template"><span class="tmpl-t">Template</span><svg class="chev-m" viewBox="0 0 18 18"><path class="st" d="M3 6.500l6 6 6-6"/></svg></div>
            </div>
          </section>

          <section class="picker">
            <div class="pk-tabs">
              <span class="pk-tab active"><svg viewBox="0 0 40 40"><circle class="st" cx="20" cy="20" r="18"/><path class="st" d="M20 9v12h8"/></svg></span>
              <span class="pk-tab"><svg viewBox="0 0 40 40"><circle class="st" cx="20" cy="20" r="18"/><circle cx="13.500" cy="16" r="1.800" fill="#131722"/><circle cx="26.500" cy="16" r="1.800" fill="#131722"/><path class="st" d="M12 25c4 5 12 5 16 0"/></svg></span>
              <span class="pk-tab"><svg viewBox="0 0 40 40"><path class="st" d="M5 0l8 10c3-3 6-4 9-3l3-4 1 5 6-5 2 12c2 3 0 7-2 7l-1-1-3 1v17H17c-1-2-1-5 0-7l1-2c-3 1-4-1-5-1s-4 2-6 0-2-4-2-7c0-3 1-5 2-7zM10 21h.01M13 26c2 1 3 1 5 0"/></svg></span>
              <span class="pk-tab"><svg viewBox="0 0 40 40"><path class="st" d="M18 12h18v4H18zM20 16v24h14l2-24M27 12l1-10M2 27c0-6 4-9 8-9s8 3 8 9zM2 27h17v4H2zM2 31h17c0 2 0 3-1 5H3c-1-2-1-3-1-5zM1 39h24"/><circle cx="7" cy="24" r="1" fill="#131722"/><circle cx="10" cy="22" r="1" fill="#131722"/><circle cx="13" cy="24" r="1" fill="#131722"/></svg></span>
              <span class="pk-tab"><svg viewBox="0 0 40 40"><circle class="st" cx="20" cy="20" r="18"/><path class="st" d="M7 7c8 6 12 16 11 31M33 7C24 8 14 18 3 18M20 2c3 8 10 14 18 15M5 30c8-5 22-3 28 2"/></svg></span>
              <span class="pk-tab"><svg viewBox="0 0 40 40"><path class="st" d="M11 25C9 14 20 2 39 1c0 18-11 29-21 28zM8 19l-7 3 6 3M23 33l-2 6 6-5c1-2 2-4 2-8M11 25l7 4M27 14a3.800 3.800 0 1 0 .1 0M11 30l-4 5M7 28l-5 6M14 33l-4 5"/></svg></span>
              <span class="pk-tab"><svg viewBox="0 0 40 40"><circle class="st" cx="20" cy="15" r="13.500"/><path class="st" d="M13 26v8a1 1 0 0 0 1 1h12a1 1 0 0 0 1-1v-8M13 30h14M16 35l1 3h6l1-3M14 14h12M20 14v14"/></svg></span>
              <span class="pk-tab"><svg viewBox="0 0 40 40"><path class="st" d="M20 37C10 28 3 21 3 13 3 7 7 4 12 4c4 0 7 2 8 5 1-3 4-5 8-5 5 0 9 3 9 9 0 8-7 15-17 24z"/></svg></span>
              <span class="pk-tab"><svg viewBox="0 0 40 40"><path class="st" d="M6 2v37M6 3c5-2 9-1 14 1s9 2 14 0v12c-5 2-9 2-14 0S11 14 6 16M6 24c5-2 9-1 14 1s9 2 14 0V14"/></svg></span>
            </div>
            <div class="pk-scroll"></div>
            <h4 class="pk-h first">Recently used</h4>
            <div class="pk-grid">
              <svg class="em"><use href="#grin"/></svg><svg class="em"><use href="#think"/></svg><svg class="em"><use href="#milky"/></svg><svg class="em"><use href="#winky"/></svg><svg class="em"><use href="#party"/></svg><svg class="em"><use href="#dancers"/></svg><svg class="em"><use href="#scream"/></svg><svg class="em"><use href="#tiger"/></svg><svg class="em"><use href="#halo"/></svg>
              <svg class="em"><use href="#orang"/></svg><svg class="em"><use href="#moon"/></svg><svg class="em"><use href="#fear"/></svg><svg class="em"><use href="#flagtf"/></svg><svg class="em"><use href="#night"/></svg><svg class="em"><use href="#tree"/></svg><svg class="em"><use href="#artist"/></svg><svg class="em"><use href="#redhair"/></svg><svg class="em"><use href="#mechleg"/></svg>
            </div>
            <h4 class="pk-h">Smiles &amp; People</h4>
            <div class="pk-grid">
              <svg class="em"><use href="#grin"/></svg><svg class="em"><use href="#smiley"/></svg><svg class="em"><use href="#happy"/></svg><svg class="em"><use href="#beam"/></svg><svg class="em"><use href="#laugh"/></svg><svg class="em"><use href="#sweat"/></svg><svg class="em"><use href="#joy"/></svg><svg class="em"><use href="#rofl"/></svg><svg class="em"><use href="#relaxed"/></svg>
              <svg class="em"><use href="#blush"/></svg><svg class="em"><use href="#halo"/></svg><svg class="em"><use href="#slight"/></svg><svg class="em"><use href="#upside"/></svg><svg class="em"><use href="#winky"/></svg><svg class="em"><use href="#relieved"/></svg><svg class="em"><use href="#hearteyes"/></svg><svg class="em"><use href="#hearts"/></svg><svg class="em"><use href="#kissheart"/></svg>
              <svg class="em"><use href="#kissing"/></svg><svg class="em"><use href="#kisssmile"/></svg><svg class="em"><use href="#kissblush"/></svg><svg class="em"><use href="#yum"/></svg><svg class="em"><use href="#tongueout"/></svg><svg class="em"><use href="#xtongue"/></svg><svg class="em"><use href="#winkt"/></svg><svg class="em"><use href="#zany"/></svg><svg class="em"><use href="#brow"/></svg>
              <svg class="em"><use href="#monocle"/></svg><svg class="em"><use href="#nerd"/></svg><svg class="em"><use href="#cool"/></svg><svg class="em"><use href="#starstruck"/></svg><svg class="em"><use href="#party"/></svg><svg class="em"><use href="#smirk"/></svg><svg class="em"><use href="#unamused"/></svg><svg class="em"><use href="#sad"/></svg><svg class="em"><use href="#pensive"/></svg>
            </div>
          </section>
        </div>
        <div class="ranges">
          <div class="tf"><span>1D</span><span>5D</span><span>1M</span><span>3M</span><span>6M</span><span>YTD</span><span>1Y</span><span>5Y</span><span>All</span></div>
          <i class="rsep"></i>
          <svg class="goto" viewBox="0 0 28 28"><path class="st15" d="M5 13V5a1 1 0 0 1 1-1h16a1 1 0 0 1 1 1v19a1 1 0 0 1-1 1h-6M5 9.500h18M10 1.500v5M18 1.500v5M3 20.500h10M9.500 16.500l4 4-4 4"/></svg>
          <span class="grow"></span>
          <span class="clock">06:21:37 (UTC+13)</span>
          <i class="rsep s2r"></i>
          <span class="adj">ADJ</span>
        </div>
      </main>
      <footer class="panel">
        <span class="ptab">Stock Screener</span>
        <svg class="chev pchev" viewBox="0 0 18 18"><path class="st15" d="M2 6.500l7 6.500 7-6.500"/></svg>
        <span class="ptab pine">Pine Editor</span>
        <span class="ptab">Strategy Tester</span>
        <span class="ptab">Replay Trading</span>
        <span class="ptab">Trading Panel</span>
        <span class="grow"></span>
        <svg class="i44" viewBox="0 0 22 22"><path class="st" d="M3 15l8-8 8 8"/></svg>
        <svg class="i44 maxi" viewBox="0 0 22 22"><path class="st" d="M4 7.500V5a2 2 0 0 1 2-2h10a2 2 0 0 1 2 2v2.500M18 14.500V17a2 2 0 0 1-2 2H6a2 2 0 0 1-2-2v-2.500"/></svg>
      </footer>
    </div>

    <aside class="righttools">
      <div class="rtool"><svg class="i56" viewBox="0 0 28 28"><rect class="st" x="2.500" y="2.500" width="23" height="22.500" rx="2"/><path class="st" d="M7 8.500h14M7 13.500h14M7 18.700h14"/></svg></div>
      <div class="rtool"><svg class="i56" viewBox="0 0 28 28"><circle class="st" cx="14" cy="14" r="10.800"/><path class="st" d="M15 8.500V16H9M1 7.500L7.500 2M27 7.500L20.500 2"/></svg></div>
      <div class="rtool"><svg class="i56" viewBox="0 0 28 28"><path class="st" d="M14 5l11.500 6.500L14 18 2.500 11.500zM2.500 17L14 23.500 25.500 17"/></svg></div>
      <div class="rtool"><svg class="i56" viewBox="0 0 28 28"><use href="#bulbshape" class="st"/></svg></div>
      <div class="vsep rsepv"></div>
      <div class="rtool sm"><svg class="i56" viewBox="0 0 28 28"><path class="st" d="M2.500 22.500V5a2 2 0 0 1 2-2H20a2 2 0 0 1 2 2v10.500a2 2 0 0 1-2 2H8zM22 9h1.500a2 2 0 0 1 2 2v14.500L20 21h-7a3 3 0 0 1-3-3.500"/></svg></div>
      <div class="rtool sm"><svg class="i56" viewBox="0 0 28 28"><use href="#bulbshape" class="st"/><path class="st" d="M1.500 5.500c-2 3.500-2 8 0 11.500M3.500 7c-1.300 2.500-1.300 6 0 8.500M26.500 5.500c2 3.500 2 8 0 11.500M24.500 7c1.300 2.500 1.300 6 0 8.500"/></svg></div>
      <div class="grow"></div>
      <div class="rtool"><svg class="i56" viewBox="0 0 28 28"><circle class="st" cx="14" cy="14" r="13.500"/><circle class="st" cx="14" cy="14" r="8"/><circle cx="14" cy="14" r="2" fill="#131722"/><path class="st" d="M14 14l7-10"/></svg></div>
      <div class="rtool"><svg class="i56" viewBox="0 0 28 28"><path class="st" d="M3 8a2 2 0 0 1 2-2h18a2 2 0 0 1 2 2v17a1 1 0 0 1-1 1H4a1 1 0 0 1-1-1zM3 11h22"/><rect class="stw" x="8" y="3" width="3" height="6" rx="1"/><rect class="stw" x="17" y="3" width="3" height="6" rx="1"/></svg></div>
      <div class="rtool last"><svg class="i56" viewBox="0 0 28 28"><circle class="st" cx="14" cy="14" r="12"/><path class="st" d="M9.500 10.500a4.500 4.500 0 1 1 7 3.700c-1.500 1-2.500 2-2.500 3.800"/><circle class="st" cx="14" cy="21" r="1"/></svg></div>
    </aside>
  </div>
</div>
</body>
</html>
```
FILE: styles.css
```css
* { box-sizing: border-box; }
html, body { margin: 0; padding: 0; background: #fff; }
body { font-family: "Noto Sans", sans-serif; color: #131722; font-size: 28px; }
.defs { position: absolute; width: 0; height: 0; }
.st, .st use { fill: none; stroke: #131722; stroke-width: 1.050; }
.st1 { fill: none; stroke: #131722; stroke-width: 2.200; }
.st13 { fill: none; stroke: #131722; stroke-width: 1.500; }
.st15 { fill: none; stroke: #131722; stroke-width: 1.300; }
.st2 { fill: none; stroke: #131722; stroke-width: 2; }
.st0 { fill: none; stroke: #131722; stroke-width: 1.500; }
.stg { fill: none; stroke: #b2b5be; stroke-width: 1.500; }
.stb { fill: none; stroke: #2962ff; stroke-width: 1.300; }
.stw, .stw use { fill: #fff; stroke: #131722; stroke-width: 1.050; }
.sthex { fill: none; stroke: #131722; stroke-width: 2; }
.grow { flex: 1 1 auto; }
.i56 { width: 56px; height: 56px; flex: none; display: block; }
.i48 { width: 48px; height: 48px; flex: none; display: block; }
.i44 { width: 44px; height: 44px; flex: none; display: block; }
.i36 { width: 36px; height: 36px; flex: none; display: block; }
.i28 { width: 30px; height: 30px; flex: none; display: block; }

.app { width: 2560px; height: 1600px; padding-bottom: 5px; overflow: hidden; display: flex; flex-direction: column; }

/* top bar */
.topbar { height: 76px; flex: none; display: flex; align-items: center; padding-left: 24px; background: #fff; }
.logo { width: 56px; height: 56px; flex: none; margin-right: 48px; }
.symbol { display: flex; align-items: center; width: 180px; flex: none; }
.gapicon { margin-right: 6px; }
.bold { font-weight: 600; font-size: 26px; white-space: nowrap; }
.plus { margin-left: 10px; }
.tsep { width: 2px; height: 44px; background: #e0e3eb; flex: none; display: block; }
.s1 { margin-left: 27px; }
.res { width: 90px; text-align: center; flex: none; font-size: 26px; }
.cndl { margin-left: 20px; }
.s3 { margin-left: 18px; }
.indic { margin-left: 22px; margin-right: 6px; }
.lbl { white-space: nowrap; font-size: 26.500px; }
.ind-t { width: 132px; flex: none; }
.chev { width: 18px; height: 18px; flex: none; display: block; }
.ind-c { margin-left: 24px; }
.tmpl { margin-left: 21px; }
.s4 { margin-left: 18px; }
.alrt { margin-left: 18px; }
.alrt-t { margin-left: 2px; width: 62px; flex: none; }
.rply { margin-left: 34px; }
.rply-t { margin-left: 0; width: 85px; flex: none; }
.s5 { margin-left: 28px; }
.undo { margin-left: 25px; }
.redo { margin-left: 38px; }
.layout { width: 40px; height: 36px; flex: none; }
.unn { margin-left: 27px; width: 117px; flex: none; }
.unn-c { margin-left: 23px; }
.s6 { margin-left: 20px; }
.qs { margin-left: 23px; }
.hex { margin-left: 17px; }
.fs { margin-left: 20px; }
.cam { margin-left: 19px; }
.publish { margin-left: 19px; margin-right: 10px; width: 137px; height: 56px; flex: none; border-radius: 28px; background: #2962ff; color: #fff; font-size: 27px; display: flex; align-items: center; justify-content: center; }

/* workspace */
.workspace { flex: 1 1 auto; min-height: 0; margin-left: 5px; padding-top: 8px; background: #e0e3eb; display: flex; gap: 8px; }
.lefttools { width: 99px; flex: none; background: #fff; border-top-right-radius: 8px; padding: 11px 0 0; display: flex; flex-direction: column; }
.tool { height: 72px; display: flex; align-items: center; justify-content: center; margin-left: -5px; flex: none; }
.tool.short { height: 69px; }
.tool.mid { height: 71.500px; }
.vsep { height: 2px; background: #e0e3eb; width: 72px; flex: none; }
.vsep.first { margin: 14px 0 13px 11px; }
.vsep.second { margin: 17px 0 14px 11px; }
.vsep.third { margin: 13px 0 11px 11px; }
.center { flex: 1 1 auto; min-width: 0; display: flex; flex-direction: column; gap: 8px; }
.righttools { width: 90px; flex: none; background: #fff; border-top-left-radius: 8px; padding-top: 1px; display: flex; flex-direction: column; }
.rtool { height: 92px; flex: none; display: flex; align-items: center; justify-content: center; }
.rtool svg { overflow: visible; }
.rtool.sm { height: 88px; }
.vsep.rsepv { width: 66px; margin: 12px 0 13px 12px; }
.rtool.last { height: 88px; }

/* chart */
.chart { height: 1433px; flex: none; background: #fff; border-radius: 8px; display: flex; flex-direction: column; overflow: hidden; }
.pane { height: 1355px; flex: none; position: relative; border-bottom: 2px solid #e0e3eb; }
.plot { position: absolute; left: 0; top: 0; width: 2350px; height: 1353px; display: block; }
.gridl { fill: none; stroke: #f2f3f5; stroke-width: 2; }
.wick { fill: none; stroke-width: 2.500; }
.body { fill: none; stroke-width: 16; }
.red { stroke: #f23645; }
.grn { stroke: #089981; }
.axisbg { fill: #fff; }
.mark { fill: #131722; }
.plabels text { font-size: 23.500px; fill: #131722; }
.tlabels text { font-size: 23.500px; fill: #131722; text-anchor: middle; }
.tlabels .thick { font-weight: 600; text-anchor: start; }
.crossbox { fill: #2962ff; }
.crossline { stroke: #2962ff; stroke-width: 1; opacity: .5; }
.crosstext { fill: #fff; font-size: 23.500px; text-anchor: middle; }

.legend { position: absolute; left: 18px; top: 14px; height: 36px; display: flex; align-items: center; white-space: nowrap; }
.apple { width: 36px; height: 36px; flex: none; }
.ticker { margin-left: 9px; width: 362px; flex: none; font-size: 29.300px; }
.pill { width: 79px; height: 36px; flex: none; display: flex; border-radius: 18px; overflow: hidden; }
.pill-g { width: 40px; background: #daf1ed; display: flex; align-items: center; justify-content: center; }
.dot { width: 16px; height: 16px; border-radius: 50%; background: #089981; display: block; }
.pill-r { flex: 1; background: #fcdbe3; color: #f23645; display: flex; align-items: center; justify-content: center; font-size: 26px; font-weight: 700; line-height: 1; }
.ohlc { margin-left: 32px; font-size: 25px; display: flex; }
.ohlc b { font-weight: 400; color: #131722; }
.ohlc em { font-style: normal; color: #f23645; }
.ohlc .mg { margin-left: 12px; }
.ohlc .mg2 { margin-left: 15px; }
.usd { position: absolute; left: 2250px; top: 9px; width: 92px; height: 49px; border: 2px solid #e0e3eb; border-radius: 8px; background: #fff; display: flex; align-items: center; padding-left: 8px; font-size: 21px; gap: 10px; }
.chev-s { width: 14px; height: 14px; display: block; }

/* signpost */
.signpost { position: absolute; left: 1391px; top: 457px; width: 140px; display: flex; flex-direction: column; align-items: center; }
.sp-label { position: relative; width: 100px; height: 50px; border: 2px solid #e0e3eb; border-radius: 8px; background: #fff; font-family: "DejaVu Sans", sans-serif; font-size: 22px; line-height: 46px; text-align: center; }
.sp-handle { position: absolute; left: 36px; top: -13px; width: 24px; height: 23px; border: 4px solid #2962ff; border-radius: 7px; background: #fff; display: block; }
.sp-stem { width: 2px; background: #787b86; display: block; flex: none; }
.sp-stem.top { height: 17px; margin-top: 1px; }
.sp-stem.bottom { height: 58px; }
.sp-pin { width: 140px; height: 140px; flex: none; border-radius: 50%; background: #80deea; border: 2px solid #fff; box-shadow: 0 0 2px rgba(19,23,34,.18); display: flex; align-items: center; justify-content: center; }
.sp-emoji { width: 64px; height: 64px; display: block; }

/* dialog */
.dialog { position: absolute; left: 308px; top: 120px; width: 760px; height: 624px; background: #fff; border-radius: 12px; box-shadow: 0 4px 24px rgba(19,23,34,.22); display: flex; flex-direction: column; }
.dlg-head { height: 72px; margin-top: 32px; padding: 0 40px; display: flex; align-items: center; flex: none; }
.dlg-title { font-size: 36.500px; font-weight: 600; }
.pencil { width: 40px; height: 40px; margin-left: 22px; flex: none; }
.close { width: 34px; height: 34px; margin-right: 11px; flex: none; }
.dlg-tabs { margin: 32px 40px 0; height: 46px; display: flex; gap: 48px; font-size: 30.800px; font-weight: 600; align-items: center; flex: none; }
.dlg-track { margin: 10px 40px 0; height: 8px; border-radius: 4px; background: #f0f3fa; flex: none; }
.dlg-track i { display: block; height: 8px; width: 74px; border-radius: 4px; background: #131722; }
.dlg-row { margin: 48px 40px 0; height: 68px; display: flex; align-items: center; flex: none; }
.check { width: 36px; height: 36px; border-radius: 6px; background: #2a2e39; flex: none; }
.check svg { width: 36px; height: 36px; display: block; }
.pinlbl { margin-left: 16px; width: 159px; flex: none; padding-bottom: 3px; }
.emo-btn { width: 72px; height: 68px; border: 4px solid #2962ff; border-radius: 10px; display: flex; align-items: center; justify-content: center; flex: none; }
.col-btn { width: 68px; height: 68px; margin-left: 16px; border: 3px solid #d1d4dc; border-radius: 10px; display: flex; align-items: center; justify-content: center; flex: none; }
.col-btn i { width: 48px; height: 48px; border-radius: 6px; background: #80deea; display: block; }
.em { width: 48px; height: 48px; display: block; }
.dlg-foot { margin-top: auto; height: 133px; border-top: 2px solid #e0e3eb; padding: 32px 40px; flex: none; }
.template { width: 199px; height: 67px; border: 2px solid #d1d4dc; border-radius: 12px; padding: 0 14px 0 16px; display: flex; align-items: center; justify-content: space-between; font-size: 27px; }
.tmpl-t { padding-bottom: 3px; }
.chev-m { width: 24px; height: 24px; display: block; }

/* picker */
.picker { position: absolute; left: 559px; top: 436px; width: 708px; height: 660px; background: #fff; border-radius: 10px; box-shadow: 0 2px 12px rgba(19,23,34,.2); overflow: hidden; }
.pk-tabs { height: 95px; padding: 0 12px; border-bottom: 2px solid #e0e3eb; display: flex; }
.pk-tab { width: 76px; flex: none; display: flex; justify-content: center; padding-top: 26px; position: relative; height: 95px; }
.pk-tab svg { width: 42px; height: 42px; display: block; overflow: visible; }
.pk-tab .st { stroke-width: 1.900; }
.pk-tab.active::after { content: ""; position: absolute; left: 0; right: 0; bottom: 0; height: 7px; background: #2962ff; }
.pk-scroll { position: absolute; left: 700px; top: 98px; width: 6px; height: 30px; border-radius: 3px; background: #9598a1; }
.pk-h { margin: 7px 0 0; padding-left: 36px; font-size: 21.500px; line-height: 30px; font-weight: 400; color: #787b86; text-transform: uppercase; letter-spacing: .2px; }
.pk-h.first { margin-top: 21px; margin-bottom: 1px; }
.pk-grid { display: grid; grid-template-columns: repeat(9, 75px); grid-auto-rows: 76px; padding: 23px 0 0 25px; justify-items: start; }

/* range bar and bottom panel */
.ranges { height: 78px; flex: none; display: flex; align-items: center; padding: 0 20px 2px 29px; }
.tf { display: flex; gap: 24px; font-size: 25px; white-space: nowrap; flex: none; }
.rsep { width: 2px; height: 44px; background: #e0e3eb; flex: none; display: block; margin-left: 21px; }
.goto { width: 40px; height: 40px; flex: none; display: block; margin-left: 26px; }
.clock { font-size: 27px; white-space: nowrap; flex: none; }
.s2r { margin-left: 19px; }
.adj { font-size: 27px; margin-left: 20px; flex: none; }
.panel { flex: 1 1 auto; min-height: 0; background: #fff; border-radius: 8px 8px 0 0; display: flex; align-items: center; padding: 0 16px 2px 32px; font-size: 26.500px; }
.ptab { white-space: nowrap; flex: none; margin-right: 64px; }
.ptab:first-child { margin-right: 23px; }
.pchev { margin-right: 48px; }
.maxi { margin-left: 28px; }
```
